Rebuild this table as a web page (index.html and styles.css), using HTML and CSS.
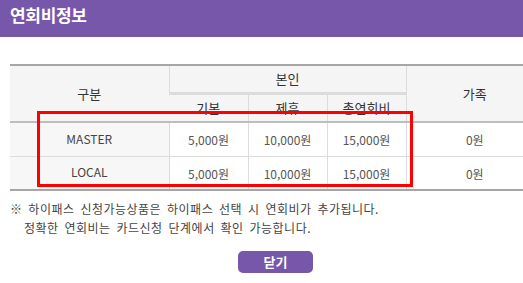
FILE: index.html
```html
<!DOCTYPE html>
<html lang="ko">
<head>
<meta charset="utf-8">
<link rel="stylesheet" href="styles.css">
</head>
<body>
<div class="popup">
  <div class="title-bar"><h1 class="title">연회비정보</h1></div>
  <div class="content">
    <div class="table-wrap">
      <table class="fee-table">
        <colgroup>
          <col class="c1"><col class="c2"><col class="c3"><col class="c4"><col class="c5">
        </colgroup>
        <thead>
          <tr class="h1">
            <th rowspan="2" class="th-main">구분</th>
            <th colspan="3" class="th-group">본인</th>
            <th rowspan="2" class="th-main th-last">가족</th>
          </tr>
          <tr class="h2">
            <th class="th-sub">기본</th>
            <th class="th-sub">제휴</th>
            <th class="th-sub">총연회비</th>
          </tr>
        </thead>
        <tbody>
          <tr class="r1">
            <td class="name">MASTER</td>
            <td>5,000원</td>
            <td>10,000원</td>
            <td>15,000원</td>
            <td class="td-last">0원</td>
          </tr>
          <tr class="r2">
            <td class="name">LOCAL</td>
            <td>5,000원</td>
            <td>10,000원</td>
            <td>15,000원</td>
            <td class="td-last">0원</td>
          </tr>
        </tbody>
      </table>
      <div class="highlight"></div>
    </div>
    <div class="notes">
      <p class="note">※ 하이패스 신청가능상품은 하이패스 선택 시 연회비가 추가됩니다.</p>
      <p class="note indent">정확한 연회비는 카드신청 단계에서 확인 가능합니다.</p>
    </div>
    <div class="actions"><button class="btn-close">닫기</button></div>
  </div>
</div>
</body>
</html>
```

FILE: styles.css
```css
* { box-sizing: border-box; }
html, body { margin: 0; padding: 0; }
body {
  width: 523px;
  height: 283px;
  overflow: hidden;
  background: #fff;
  font-family: "Noto Sans CJK KR", "Noto Sans", sans-serif;
  color: #444;
}
.title-bar {
  height: 37px;
  background: #7757aa;
  padding-left: 10px;
  display: flex;
  align-items: center;
}
.title {
  margin: 0;
  font-size: 17px;
  font-weight: 700;
  color: #fff;
  letter-spacing: -0.3px;
  line-height: 1;
  position: relative;
  top: -4px;
}
.content {
  padding: 27px 0 0 10px;
}
.table-wrap {
  position: relative;
  width: 533px;
}
.fee-table {
  width: 533px;
  table-layout: fixed;
  border-collapse: collapse;
  font-size: 12px;
}
.c1 { width: 159px; }
.c2 { width: 79px; }
.c3 { width: 79px; }
.c4 { width: 79px; }
.c5 { width: 137px; }
.fee-table thead tr:first-child th { border-top: 2px solid #a6a6a6; }
.fee-table th {
  background: #f5f5f5;
  color: #333;
  font-weight: 400;
  font-size: 13px;
  padding: 0;
  text-align: center;
  border-left: 1px solid #dcdcdc;
}
.fee-table th:first-child { border-left: none; }
.h1 { height: 28px; }
.h2 { height: 29px; }
.th-group { border-bottom: 3px solid #dcdcdc; padding-top: 1px; }
.th-sub { padding-top: 3px; }
.h2 th { border-left: 1px solid #dcdcdc; }
.h2 th:first-child { border-left: none; }
.fee-table thead tr.h2 th,
.fee-table thead th[rowspan] { border-bottom: 2px solid #bdbdbd; }
.fee-table td {
  height: 34px;
  padding: 0;
  text-align: center;
  color: #555;
  border-left: 1px solid #dcdcdc;
  border-bottom: 1px solid #dcdcdc;
  padding-top: 1px;
}
.fee-table td.name {
  background: #f7f7f7;
  border-left: none;
  color: #444;
  padding-top: 0;
  padding-bottom: 2px;
}
.fee-table tbody tr:last-child td { border-bottom: 2px solid #a6a6a6; }
.highlight {
  position: absolute;
  left: 27px;
  top: 47px;
  width: 376px;
  height: 76px;
  border: 3px solid #ff0000;
  pointer-events: none;
}
.notes {
  margin-top: 8px;
  font-size: 12px;
  color: #444;
  line-height: 19px;
  letter-spacing: 0.5px;
  word-spacing: 2px;
}
.note { margin: 0; white-space: nowrap; }
.indent { padding-left: 14px; }
.actions {
  display: flex;
  justify-content: flex-start;
  padding-left: 228px;
  margin-top: 14px;
}
.btn-close {
  width: 75px;
  height: 22px;
  border: none;
  border-radius: 5px;
  background: #7757aa;
  color: #fff;
  font-family: "Noto Sans CJK KR", "Noto Sans", sans-serif;
  font-size: 13px;
  font-weight: 700;
  padding: 0;
  line-height: 22px;
}
```
